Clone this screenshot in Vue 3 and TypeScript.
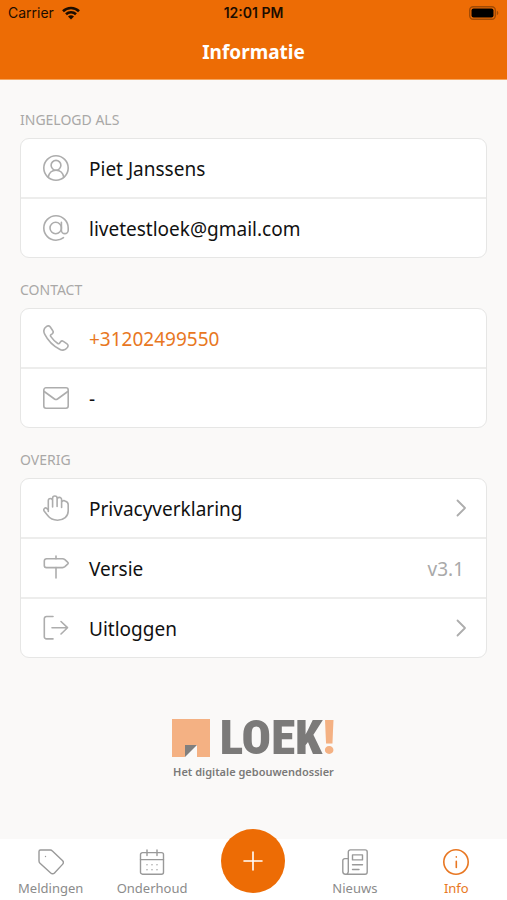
<script setup lang="ts">
interface Row {
  icon: string
  text: string
  kind: 'text' | 'phone' | 'action'
  value?: string
}

interface Section {
  title: string
  rows: Row[]
}

interface Tab {
  icon: string
  label: string
  active?: boolean
}

const icons: Record<string, string[]> = {
  user: [
    'M13 .8a12.2 12.2 0 1 0 0 24.4a12.2 12.2 0 1 0 0-24.4z',
    'M13 5.4a4.9 4.9 0 1 0 0 9.8a4.9 4.9 0 1 0 0-9.8z',
    'M5.3 22.2c.7-4.2 3.7-7 7.7-7s7 2.8 7.7 7',
  ],
  at: [
    'M12.7 7.3a5.7 5.7 0 1 0 0 11.4a5.7 5.7 0 1 0 0-11.4z',
    'M18.4 7.3v7.9a3.4 3.4 0 0 0 6.8 0V13A12.2 12.2 0 1 0 13 25.2c3 0 5.500-.8 7.500-2.500',
  ],
  phone: [
    'M16.6 24.2c3 1.7 6 .8 7.9-1.8.9-1.300.7-2.800-.5-3.600l-3.600-2.400c-1-.7-2.200-.4-3 .6l-.9 1.200c-.4.600-1.100.7-1.700.3-2.800-1.900-5.200-4.300-7.100-7.100-.4-.6-.2-1.300.3-1.700l1.200-.9c1-.8 1.300-2 .6-3L7.300 2C6.500.8 4.900.5 3.600 1.400 1 3.200.1 6.200 1.800 9.300c3.300 6.500 8.300 11.500 14.800 14.900z',
  ],
  mail: [
    'M3 2.800h20a2.200 2.200 0 0 1 2.200 2.200v16a2.200 2.200 0 0 1-2.200 2.200H3A2.200 2.200 0 0 1 .8 21V5A2.200 2.200 0 0 1 3 2.800z',
    'M1.200 6.500L11.500 14q1.500 1 3 0l10.300-7.500',
  ],
  hand: [
    'M5.300 16.500V5.600a2.150 2.150 0 0 1 4.300 0V12M9.600 5.600V3.200a2.250 2.250 0 0 1 4.500 0V11.500M14.100 4.600a2.250 2.250 0 0 1 4.500 0V12.500M18.600 7.500a2.200 2.200 0 0 1 3.800-1.200c1.800.5 2.800 1.700 2.800 3.500v6.200c0 5.400-4.400 9.200-10.700 9.200-4.700 0-7.500-1.600-9.800-4.600l-3.400-4.400c-1.500-2.200.9-4.200 2.600-2.700l1.400 1.600',
  ],
  sign: [
    'M13 1v2.700M13 12.600V23',
    'M3.500 3.700h16c1 0 1.700.3 2.400.9l2.700 2.500q1.200 1 0 2.100l-2.700 2.500c-.7.6-1.400.9-2.400.9h-16A2.200 2.200 0 0 1 1.300 10.400V5.900a2.200 2.200 0 0 1 2.200-2.200z',
  ],
  logout: ['M10 1.500H3.500A2.200 2.200 0 0 0 1.300 3.700v18a2.200 2.200 0 0 0 2.200 2.200H10', 'M9 12.700h15.500M18 6.500l6.500 6.200L18 19'],
  tag: [
    'M2.500 1h9.800c.9 0 1.500.3 2.100.9l10 9.500c1.200 1.200 1.200 2.800.1 4l-8 8.500c-1.100 1.200-2.600 1.200-3.800.1L2 14.300c-.7-.6-1-1.300-1-2.200V2.500A1.500 1.500 0 0 1 2.500 1z',
    'M7.500 7.400v.2',
  ],
  calendar: [
    'M3.500 3.600h19a2 2 0 0 1 2 2v17.600a2 2 0 0 1-2 2h-19a2 2 0 0 1-2-2V5.600a2 2 0 0 1 2-2z',
    'M1.500 10.600h23M8 1v5.500M18 1v5.500',
    'M8 15.700v.1M13 15.700v.1M18 15.700v.1M8 20.600v.1M13 20.600v.1M18 20.600v.1',
  ],
  news: [
    'M6.300 22.500V3A2.100 2.100 0 0 1 8.400.9h14.700A2.100 2.100 0 0 1 25.200 3v20a2.200 2.200 0 0 1-2.200 2.200H3.500A2.700 2.700 0 0 1 .8 22.500V11.600A2 2 0 0 1 2.800 9.600h3.500M6.300 22.500a2.700 2.700 0 0 1-2.800 2.700',
    'M10.500 5.900h10v5h-10zM10.500 15.800h10M10.500 20.500h6.500',
  ],
  info: ['M13 .8a12.2 12.2 0 1 0 0 24.4a12.2 12.2 0 1 0 0-24.4z', 'M13.3 12.2v6.3M13.3 7.9v.2'],
  chevron: ['M9.500 5.500l7.500 7.500-7.500 7.500'],
  plus: ['M13 4v18M4 13h18'],
}

const sections: Section[] = [
  {
    title: 'INGELOGD ALS',
    rows: [
      { icon: 'user', text: 'Piet Janssens', kind: 'text' },
      { icon: 'at', text: 'livetestloek@gmail.com', kind: 'text' },
    ],
  },
  {
    title: 'CONTACT',
    rows: [
      { icon: 'phone', text: '+31202499550', kind: 'phone' },
      { icon: 'mail', text: '-', kind: 'text' },
    ],
  },
  {
    title: 'OVERIG',
    rows: [
      { icon: 'hand', text: 'Privacyverklaring', kind: 'action' },
      { icon: 'sign', text: 'Versie', kind: 'text', value: 'v3.1' },
      { icon: 'logout', text: 'Uitloggen', kind: 'action' },
    ],
  },
]

const leftTabs: Tab[] = [
  { icon: 'tag', label: 'Meldingen' },
  { icon: 'calendar', label: 'Onderhoud' },
]
const rightTabs: Tab[] = [
  { icon: 'news', label: 'Nieuws' },
  { icon: 'info', label: 'Info', active: true },
]

const rowTag = (row: Row): string => (row.kind === 'phone' ? 'a' : row.kind === 'action' ? 'button' : 'div')
const rowAttrs = (row: Row): Record<string, string> => {
  if (row.kind === 'phone') return { href: `tel:${row.text}` }
  if (row.kind === 'action') return { type: 'button' }
  return {}
}
</script>

<template>
  <div class="screen">
    <header class="header">
      <div class="status">
        <span class="carrier">
          Carrier
          <svg class="wifi" viewBox="0 0 18 14" aria-hidden="true">
            <path d="M1 5.2a11.5 11.5 0 0 1 16 0M4 8.3a7.2 7.2 0 0 1 10 0" />
            <path class="solid" d="M9 13.5L6 10.6a4.3 4.3 0 0 1 6 0z" />
          </svg>
        </span>
        <span class="time">12:01 PM</span>
        <svg class="battery" viewBox="0 0 30 14" aria-hidden="true">
          <rect class="shell" x=".7" y=".7" width="25.6" height="12.6" rx="3.5" />
          <rect x="2.5" y="2.5" width="22" height="9" rx="2" />
          <path class="cap" d="M27.8 4.8c2 .7 2 3.700 0 4.400z" />
        </svg>
      </div>
      <h1 class="title">Informatie</h1>
    </header>

    <main class="content">
      <section v-for="section in sections" :key="section.title" class="section">
        <h2 class="heading">{{ section.title }}</h2>
        <ul class="card">
          <li v-for="row in section.rows" :key="row.text" class="item">
            <component :is="rowTag(row)" class="row" :class="row.kind" v-bind="rowAttrs(row)">
              <svg class="icon" viewBox="0 0 26 26" aria-hidden="true">
                <path v-for="d in icons[row.icon]" :key="d" :d="d" />
              </svg>
              <span class="label">{{ row.text }}</span>
              <span v-if="row.value" class="value">{{ row.value }}</span>
              <svg v-if="row.kind === 'action'" class="icon chevron" viewBox="0 0 26 26" aria-hidden="true">
                <path v-for="d in icons.chevron" :key="d" :d="d" />
              </svg>
            </component>
          </li>
        </ul>
      </section>

      <div class="brand">
        <div class="wordmark">
          <svg class="mark" viewBox="0 0 38 38" aria-hidden="true">
            <path class="sheet" d="M0 0h38v38H25V26H13v12H0z" />
            <path class="fold" d="M13 26h12L13 38z" />
          </svg>
          <span class="name">LOEK<span class="bang">!</span></span>
        </div>
        <p class="tagline">Het digitale gebouwendossier</p>
      </div>
    </main>

    <nav class="tabs">
      <a v-for="tab in leftTabs" :key="tab.label" href="#" class="tab">
        <svg class="icon" viewBox="0 0 26 26" aria-hidden="true">
          <path v-for="d in icons[tab.icon]" :key="d" :d="d" />
        </svg>
        {{ tab.label }}
      </a>
      <button type="button" class="add" aria-label="Nieuwe melding">
        <svg class="icon" viewBox="0 0 26 26" aria-hidden="true">
          <path v-for="d in icons.plus" :key="d" :d="d" />
        </svg>
      </button>
      <a v-for="tab in rightTabs" :key="tab.label" href="#" class="tab" :class="{ active: tab.active }">
        <svg class="icon" viewBox="0 0 26 26" aria-hidden="true">
          <path v-for="d in icons[tab.icon]" :key="d" :d="d" />
        </svg>
        {{ tab.label }}
      </a>
    </nav>
  </div>
</template>

<style>
body {
  margin: 0;
  background: #faf9f8;
}
</style>

<style scoped>
.screen {
  display: flex;
  flex-direction: column;
  min-height: 100vh;
  color: #111;
  font-family: 'Noto Sans', sans-serif;
}

.header {
  background: #ed6c05;
  border-bottom: 1px solid #f5a660;
}

.status {
  display: grid;
  grid-template-columns: 1fr auto 1fr;
  align-items: center;
  height: 26px;
  padding: 0 8px;
  color: #1d0d00;
  font: 14px/26px Inter, sans-serif;
}

.carrier {
  display: flex;
  align-items: center;
  gap: 8px;
}

.wifi {
  width: 18px;
  height: 14px;
  fill: none;
  stroke: #1d0d00;
  stroke-width: 2.6;
}

.wifi .solid {
  fill: #1d0d00;
  stroke: none;
}

.time {
  font-weight: 600;
}

.battery {
  justify-self: end;
  width: 30px;
  height: 14px;
}

.shell {
  fill: none;
  stroke: #a04a05;
  stroke-width: 1.4;
}

.cap {
  fill: #a04a05;
}

.title {
  margin: 0;
  color: #fff;
  font-size: 19px;
  font-weight: 700;
  line-height: 53px;
  text-align: center;
}

.content {
  flex: 1;
  padding: 28px 20px 0;
}

.section {
  margin-bottom: 20px;
}

.heading {
  margin: 0 0 6px;
  color: #a9a8a7;
  font-size: 14px;
  font-weight: 400;
  line-height: 24px;
}

.card {
  margin: 0;
  padding: 0;
  overflow: hidden;
  list-style: none;
  background: #fff;
  border: 1px solid #e6e6e5;
  border-radius: 9px;
}

.item + .item {
  border-top: 2px solid #ededec;
}

.row {
  box-sizing: border-box;
  display: flex;
  align-items: center;
  width: 100%;
  height: 58px;
  padding: 0 22px;
  border: 0;
  background: none;
  color: inherit;
  font: 19px/24px 'Noto Sans', sans-serif;
  text-align: left;
  text-decoration: none;
}

.label {
  flex: 1;
  margin-left: 20px;
  padding-top: 2px;
}

.value {
  padding-top: 2px;
  color: #a9a9a9;
}

.phone .label {
  color: #e87722;
}

.icon {
  flex: none;
  width: 26px;
  height: 26px;
  fill: none;
  stroke: #adadad;
  stroke-width: 1.6;
  stroke-linecap: round;
  stroke-linejoin: round;
}

.chevron {
  margin-right: -10px;
  stroke-width: 1.8;
}

.brand {
  display: flex;
  flex-direction: column;
  align-items: center;
  padding-top: 40px;
  color: #7b7a79;
}

.wordmark {
  display: flex;
  align-items: center;
  gap: 10px;
  height: 40px;
}

.mark {
  width: 38px;
  height: 38px;
}

.sheet {
  fill: #f4b183;
}

.fold {
  fill: #807f7e;
}

.name {
  font: 900 49px/40px 'Roboto Condensed', Roboto, sans-serif;
}

.bang {
  color: #f4b183;
}

.tagline {
  margin: 6px 0 0;
  font-size: 11px;
  font-weight: 600;
  line-height: 16px;
}

.tabs {
  position: sticky;
  bottom: 0;
  display: grid;
  grid-template-columns: repeat(5, 1fr);
  height: 61px;
  background: #fff;
}

.tab {
  display: flex;
  flex-direction: column;
  align-items: center;
  gap: 4px;
  padding-top: 10px;
  color: #8b8b8b;
  font-size: 13px;
  line-height: 18px;
  text-decoration: none;
}

.tab .icon {
  stroke: #999;
  stroke-width: 1.4;
}

.tab.active {
  color: #e87722;
}

.tab.active .icon {
  stroke: #e87722;
  stroke-width: 1.6;
}

.add {
  display: flex;
  align-items: center;
  justify-content: center;
  justify-self: center;
  width: 64px;
  height: 64px;
  margin-top: -10px;
  padding: 0;
  border: 0;
  border-radius: 50%;
  background: #ed6c05;
}

.add .icon {
  stroke: #fff;
}
</style>
